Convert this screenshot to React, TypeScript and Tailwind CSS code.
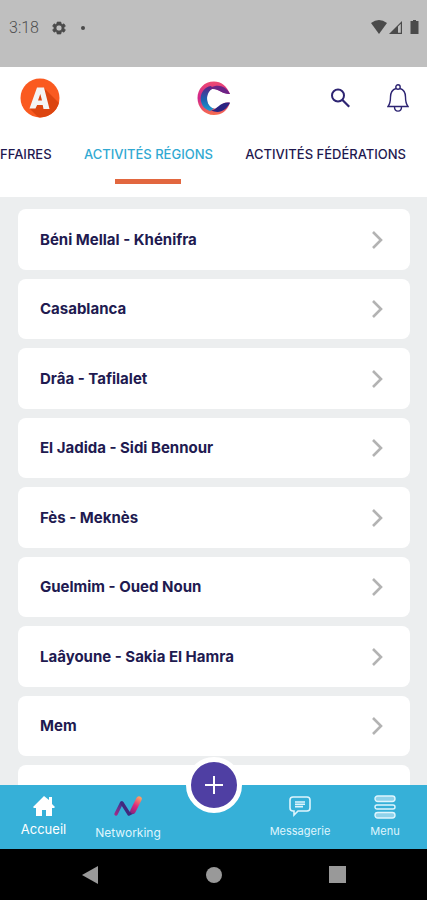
import React from "react";

const regions = [
  "Béni Mellal - Khénifra",
  "Casablanca",
  "Drâa - Tafilalet",
  "El Jadida - Sidi Bennour",
  "Fès - Meknès",
  "Guelmim - Oued Noun",
  "Laâyoune - Sakia El Hamra",
  "Mem",
];

function StatusBar() {
  return (
    <div className="flex h-[67px] shrink-0 items-start justify-between bg-[#bfbfbf] pl-[9px] pr-2 pt-[18px] text-[#4a4a4a]">
      <div className="flex h-5 items-center">
        <span className="w-[42px] font-['Roboto',sans-serif] text-base font-light leading-5 text-[#505050]">3:18</span>
        <svg className="size-4" viewBox="0 0 24 24" fill="currentColor" aria-hidden="true">
          <path
            fillRule="evenodd"
            stroke="currentColor"
            d="M19.400 13a7.600 7.600 0 0 0 0-2l2.200-1.700-2.100-3.600-2.600 1a8 8 0 0 0-1.700-1L14.800 3H9.200l-.4 2.700a8 8 0 0 0-1.700 1l-2.600-1-2.100 3.600L4.600 11a7.600 7.600 0 0 0 0 2l-2.200 1.700 2.100 3.600 2.600-1a8 8 0 0 0 1.700 1l.4 2.700h5.600l.4-2.700a8 8 0 0 0 1.700-1l2.600 1 2.100-3.600zM12 16.500a4.500 4.500 0 1 1 0-9 4.500 4.500 0 0 1 0 9z"
          />
        </svg>
        <span className="ml-[14px] size-1 rounded-full bg-[#4a4a4a]" />
      </div>
      <svg className="mt-px h-4 w-[48px]" viewBox="0 0 48 16" fill="currentColor" aria-hidden="true">
        <path d="M0 4Q8-2 16 4L8 15z" />
        <path d="M18 15 31 2v13z" />
        <path d="M27 7.500 29.800 4.800v9H27z" fill="#bfbfbf" />
        <path d="M39.500 2H42V1h3v1h2.500v13h-8z" />
      </svg>
    </div>
  );
}

function Header() {
  return (
    <header className="h-[130px] shrink-0 overflow-hidden bg-white">
      <div className="grid h-[62px] grid-cols-3 items-center pl-5 pr-[18px]">
        <button type="button" aria-label="Profil" className="size-10">
          <svg className="size-10" viewBox="0 0 40 40">
            <defs>
              <clipPath id="badge"><circle cx="20" cy="20" r="19.500" /></clipPath>
            </defs>
            <g clipPath="url(#badge)">
              <path d="M0 0h40v40H0z" fill="#fa5a20" />
              <path d="m24 10 16 16v14H19l-9-9z" fill="#dc4510" />
              <path fillRule="evenodd" d="M17 9.500h7L29.500 31h-6l-.8-4h-5.600l-1.600 3.500H9.500zM20.300 16 18 22.500h4z" fill="#f4f4f4" />
            </g>
          </svg>
        </button>
        <svg className="size-9 justify-self-center" viewBox="0 0 36 36" aria-label="Logo" role="img">
          <defs>
            <linearGradient id="ring" x1="0" y1="0" x2="0" y2="1">
              <stop stopColor="#ee4a72" /><stop offset=".5" stopColor="#d0248c" /><stop offset="1" stopColor="#f8704e" />
            </linearGradient>
            <linearGradient id="crescent" x1="0" y1="0" x2="0" y2="1">
              <stop stopColor="#5a2488" /><stop offset=".55" stopColor="#1d62b0" /><stop offset="1" stopColor="#1d9cd0" />
            </linearGradient>
          </defs>
          <path d="M34 14C31 6 25 1.500 18 1.500 8 1.500 1.500 9 1.500 18S8 35 18 35c8 0 13-4 16-12-4-1-7 0-9 2-3 3-5 3.500-7 3.500-5 0-7-5-7-10.500S14 8 19 9c5 1 8 5 15 5z" fill="url(#ring)" />
          <path d="M15 6C2 8 1 27 14 31l4-2.500C9 26 9 12 17 8.500z" fill="url(#crescent)" />
          <path d="M34 14C30 6 22 4 15 7.500c-2 1-3 3-3 3 8-5 13 4 22 3.500z" fill="#6b2386" />
          <path d="M34 22.500C30 31 23 34 15 30.500c7-1 8-9 19-8z" fill="#2b2482" />
        </svg>
        <div className="flex items-center justify-end gap-9 text-[#2d2472]">
          <button type="button" aria-label="Rechercher">
            <svg className="size-[22px]" viewBox="0 0 22 22" fill="none" stroke="currentColor" strokeWidth="2">
              <circle cx="9" cy="8.500" r="6" /><path d="m13.200 12.800 7 7" strokeWidth="2.200" />
            </svg>
          </button>
          <button type="button" aria-label="Notifications">
            <svg className="h-7 w-[22px]" viewBox="0 0 22 28" fill="none" stroke="currentColor" strokeWidth="1.400">
              <circle cx="11" cy="3" r="2.200" />
              <path d="M9 4.500C4.500 6 3.500 9.500 3.500 13c0 5-.5 7-2.500 9.500h20c-2-2.500-2.500-4.500-2.500-9.500 0-3.500-1-7-5.500-8.500M7.500 23c0 5.500 7 5.500 7 0" />
            </svg>
          </button>
        </div>
      </div>
      <nav className="flex justify-between whitespace-nowrap pr-[21px] text-[13px] font-medium leading-[50px] text-[#1f194f]">
        <a href="#affaires">FFAIRES</a>
        <a href="#regions" aria-current="page" className="flex flex-col items-center text-[#31a9d2]">
          ACTIVITÉS RÉGIONS
          <span className="h-[5px] w-[66px] bg-[#e2673f]" />
        </a>
        <a href="#federations">ACTIVITÉS FÉDÉRATIONS</a>
      </nav>
    </header>
  );
}

function RegionList() {
  return (
    <main className="min-h-0 flex-1 overflow-hidden bg-[#eceeef] pl-[18px] pr-[17px] pt-3">
      <ul className="flex flex-col gap-[9px]">
        {regions.map((name) => (
          <li key={name} className="odd:h-[61px] even:h-[60px]">
            <button type="button" className="flex size-full items-center justify-between rounded-lg bg-white pl-[22px] pr-[27px] text-left text-[15px] font-bold leading-5 text-[#211a50]">
              {name}
              <svg className="h-[18px] w-3" viewBox="0 0 12 18" fill="none" stroke="#b3b3b3" strokeWidth="2.600" aria-hidden="true">
                <path d="m2 1 8 8-8 8" />
              </svg>
            </button>
          </li>
        ))}
        <li className="h-[61px] rounded-lg bg-white" />
      </ul>
    </main>
  );
}

function BottomNav() {
  return (
    <nav className="relative flex h-16 shrink-0 justify-between bg-[#36b0d8] pl-5 pr-[26px] text-[#dff5fd]">
      <div className="flex gap-7">
        <a href="#accueil" className="flex w-[47px] flex-col items-center pt-2.5 text-[13px] leading-5 text-white">
          <svg className="mb-0.5 size-[22px]" viewBox="0 0 22 22" fill="currentColor" aria-hidden="true">
            <path d="M11 1 0 12l1 1h2v8h6v-6h4v6h6v-8h2l1-1-3-3V2h-3v3z" />
          </svg>
          Accueil
        </a>
        <a href="#networking" className="flex w-[66px] flex-col items-center pt-2.5 text-xs leading-5">
          <svg className="mb-1.5 h-[22px] w-[30px]" viewBox="0 0 30 22" fill="none" strokeLinecap="round" strokeLinejoin="round" aria-hidden="true">
            <defs>
              <linearGradient id="rise" x1="3" y1="20" x2="9" y2="7" gradientUnits="userSpaceOnUse">
                <stop stopColor="#a32a88" /><stop offset="1" stopColor="#2f3a94" />
              </linearGradient>
              <linearGradient id="lift" x1="17" y1="18" x2="27" y2="3" gradientUnits="userSpaceOnUse">
                <stop stopColor="#84247f" /><stop offset=".5" stopColor="#dc2a7c" /><stop offset="1" stopColor="#ff9b62" />
              </linearGradient>
            </defs>
            <path d="M3 19 8.500 8" stroke="url(#rise)" strokeWidth="3.400" />
            <path d="m9 8 7 11 4-2" stroke="#40297f" strokeWidth="3.400" />
            <path d="m20 16 6-12" stroke="url(#lift)" strokeWidth="5.500" />
          </svg>
          Networking
        </a>
      </div>
      <div className="flex gap-9">
        <a href="#messagerie" className="flex w-[66px] flex-col items-center pt-2.5 text-[11px] leading-5">
          <svg className="mb-1 size-[22px]" viewBox="0 0 22 22" fill="none" stroke="currentColor" strokeWidth="1.600" aria-hidden="true">
            <path d="M4 2h14q3 0 3 3v8q0 3-3 3H9l-4 4v-4H4q-3 0-3-3V5q0-3 3-3z" />
            <path d="M6 7h10M6 9.300h10M6 11.600h8" />
          </svg>
          Messagerie
        </a>
        <a href="#menu" className="flex w-8 flex-col items-center pt-2.5 text-[11px] leading-5">
          <svg className="mb-0.5 h-6 w-[22px]" viewBox="0 0 22 24" fill="#8fd2ea" stroke="currentColor" strokeWidth="1.400" aria-hidden="true">
            <rect x="1" y="1" width="20" height="5.500" rx="2.700" />
            <rect x="1" y="10" width="20" height="4" rx="2" fill="none" />
            <rect x="1" y="17.500" width="20" height="5.500" rx="2.700" />
          </svg>
          Menu
        </a>
      </div>
      <button type="button" aria-label="Ajouter" className="absolute -top-7 left-1/2 flex size-14 -translate-x-1/2 items-center justify-center rounded-full border-[5px] border-white bg-[#4f3fa3]">
        <svg className="size-5" viewBox="0 0 20 20" stroke="white" strokeWidth="2"><path d="M10 1v18M1 10h18" /></svg>
      </button>
    </nav>
  );
}

function SystemNav() {
  return (
    <div className="grid h-[51px] shrink-0 grid-cols-[1fr_auto_1fr] items-center bg-black text-[#999999]">
      <svg className="mr-[108px] h-[18px] w-4 justify-self-end" viewBox="0 0 16 18" fill="currentColor" aria-hidden="true"><path d="M16 0v18L0 9z" /></svg>
      <span className="size-4 rounded-full bg-[#999999]" />
      <span className="ml-[107px] size-[17px] bg-[#999999]" />
    </div>
  );
}

export default function App() {
  return (
    <div className="flex h-screen flex-col overflow-hidden font-['Inter',sans-serif]">
      <StatusBar />
      <Header />
      <RegionList />
      <BottomNav />
      <SystemNav />
    </div>
  );
}
